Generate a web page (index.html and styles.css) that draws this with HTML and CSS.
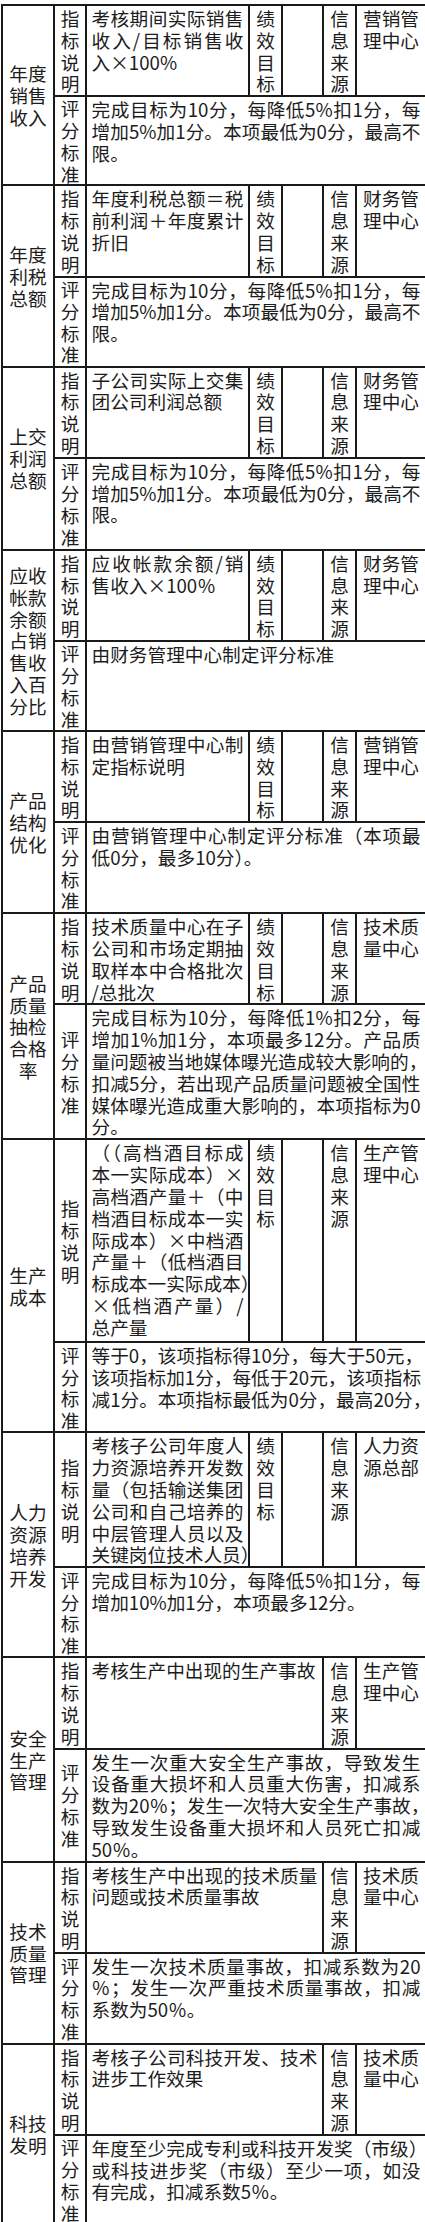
FILE: index.html
```html
<!DOCTYPE html>
<html lang="zh-CN">
<head>
<meta charset="utf-8">
<title>子公司绩效考核指标</title>
<link rel="stylesheet" href="styles.css">
</head>
<body>
<table class="kpi">
  <colgroup>
    <col class="c-name"><col class="c-tag"><col class="c-desc"><col class="c-goal"><col class="c-blank"><col class="c-src"><col class="c-owner">
  </colgroup>
  <tbody>
    <!-- 年度销售收入 -->
    <tr class="h90">
      <td class="name" rowspan="2">年度销售收入</td>
      <td class="tag">指标说明</td>
      <td class="desc"><span class="ln j">考核期间实际销售</span><span class="ln j">收入/目标销售收</span><span class="ln">入×100%</span></td>
      <td class="label">绩效目标</td>
      <td class="blank"></td>
      <td class="label">信息来源</td>
      <td class="owner">营销管理中心</td>
    </tr>
    <tr class="h89">
      <td class="tag">评分标准</td>
      <td class="desc" colspan="5"><span class="ln j">完成目标为10分，每降低5%扣1分，每</span><span class="ln j">增加5%加1分。本项最低为0分，最高不</span><span class="ln">限。</span></td>
    </tr>

    <!-- 年度利税总额 -->
    <tr class="h91">
      <td class="name" rowspan="2">年度利税总额</td>
      <td class="tag">指标说明</td>
      <td class="desc"><span class="ln j">年度利税总额＝税</span><span class="ln j">前利润＋年度累计</span><span class="ln">折旧</span></td>
      <td class="label">绩效目标</td>
      <td class="blank"></td>
      <td class="label">信息来源</td>
      <td class="owner">财务管理中心</td>
    </tr>
    <tr class="h90">
      <td class="tag">评分标准</td>
      <td class="desc" colspan="5"><span class="ln j">完成目标为10分，每降低5%扣1分，每</span><span class="ln j">增加5%加1分。本项最低为0分，最高不</span><span class="ln">限。</span></td>
    </tr>

    <!-- 上交利润总额 -->
    <tr class="h89">
      <td class="name" rowspan="2">上交利润总额</td>
      <td class="tag">指标说明</td>
      <td class="desc"><span class="ln j">子公司实际上交集</span><span class="ln">团公司利润总额</span></td>
      <td class="label">绩效目标</td>
      <td class="blank"></td>
      <td class="label">信息来源</td>
      <td class="owner">财务管理中心</td>
    </tr>
    <tr class="h92">
      <td class="tag">评分标准</td>
      <td class="desc" colspan="5"><span class="ln j">完成目标为10分，每降低5%扣1分，每</span><span class="ln j">增加5%加1分。本项最低为0分，最高不</span><span class="ln">限。</span></td>
    </tr>

    <!-- 应收帐款余额占销售收入百分比 -->
    <tr class="h90">
      <td class="name" rowspan="2">应收帐款余额占销售收入百分比</td>
      <td class="tag">指标说明</td>
      <td class="desc"><span class="ln j">应收帐款余额/销</span><span class="ln">售收入×100％</span></td>
      <td class="label">绩效目标</td>
      <td class="blank"></td>
      <td class="label">信息来源</td>
      <td class="owner">财务管理中心</td>
    </tr>
    <tr class="h90">
      <td class="tag">评分标准</td>
      <td class="desc" colspan="5"><span class="ln">由财务管理中心制定评分标准</span></td>
    </tr>

    <!-- 产品结构优化 -->
    <tr class="h90">
      <td class="name" rowspan="2">产品结构优化</td>
      <td class="tag">指标说明</td>
      <td class="desc"><span class="ln j">由营销管理中心制</span><span class="ln">定指标说明</span></td>
      <td class="label">绩效目标</td>
      <td class="blank"></td>
      <td class="label">信息来源</td>
      <td class="owner">营销管理中心</td>
    </tr>
    <tr class="h91">
      <td class="tag">评分标准</td>
      <td class="desc" colspan="5"><span class="ln j">由营销管理中心制定评分标准（本项最</span><span class="ln">低0分，最多10分）。</span></td>
    </tr>

    <!-- 产品质量抽检合格率 -->
    <tr class="h89">
      <td class="name" rowspan="2">产品质量抽检合格率</td>
      <td class="tag">指标说明</td>
      <td class="desc"><span class="ln j">技术质量中心在子</span><span class="ln j">公司和市场定期抽</span><span class="ln j">取样本中合格批次</span><span class="ln">/总批次</span></td>
      <td class="label">绩效目标</td>
      <td class="blank"></td>
      <td class="label">信息来源</td>
      <td class="owner">技术质量中心</td>
    </tr>
    <tr class="h135">
      <td class="tag">评分标准</td>
      <td class="desc" colspan="5"><span class="ln j">完成目标为10分，每降低1%扣2分，每</span><span class="ln j">增加1%加1分，本项最多12分。产品质</span><span class="ln">量问题被当地媒体曝光造成较大影响的，</span><span class="ln j">扣减5分，若出现产品质量问题被全国性</span><span class="ln j">媒体曝光造成重大影响的，本项指标为0</span><span class="ln">分。</span></td>
    </tr>

    <!-- 生产成本 -->
    <tr class="h203">
      <td class="name" rowspan="2">生产成本</td>
      <td class="tag">指标说明</td>
      <td class="desc"><span class="ln j">（（高档酒目标成</span><span class="ln j">本一实际成本）×</span><span class="ln j">高档酒产量＋（中</span><span class="ln j">档酒目标成本一实</span><span class="ln j">际成本）×中档酒</span><span class="ln j">产量＋（低档酒目</span><span class="ln">标成本一实际成本）</span><span class="ln j">×低档酒产量）/</span><span class="ln">总产量</span></td>
      <td class="label">绩效目标</td>
      <td class="blank"></td>
      <td class="label">信息来源</td>
      <td class="owner">生产管理中心</td>
    </tr>
    <tr class="h90">
      <td class="tag">评分标准</td>
      <td class="desc" colspan="5"><span class="ln j">等于0，该项指标得10分，每大于50元，</span><span class="ln j">该项指标加1分，每低于20元，该项指标</span><span class="ln">减1分。本项指标最低为0分，最高20分，</span></td>
    </tr>

    <!-- 人力资源培养开发 -->
    <tr class="h135">
      <td class="name" rowspan="2">人力资源培养开发</td>
      <td class="tag">指标说明</td>
      <td class="desc"><span class="ln j">考核子公司年度人</span><span class="ln j">力资源培养开发数</span><span class="ln j">量（包括输送集团</span><span class="ln j">公司和自己培养的</span><span class="ln j">中层管理人员以及</span><span class="ln">关键岗位技术人员）</span></td>
      <td class="label">绩效目标</td>
      <td class="blank"></td>
      <td class="label">信息来源</td>
      <td class="owner">人力资源总部</td>
    </tr>
    <tr class="h90">
      <td class="tag">评分标准</td>
      <td class="desc" colspan="5"><span class="ln j">完成目标为10分，每降低5%扣1分，每</span><span class="ln">增加10%加1分，本项最多12分。</span></td>
    </tr>

    <!-- 安全生产管理 -->
    <tr class="h89">
      <td class="name" rowspan="2">安全生产管理</td>
      <td class="tag">指标说明</td>
      <td class="desc" colspan="3"><span class="ln">考核生产中出现的生产事故</span></td>
      <td class="label">信息来源</td>
      <td class="owner">生产管理中心</td>
    </tr>
    <tr class="h113">
      <td class="tag">评分标准</td>
      <td class="desc" colspan="5"><span class="ln j">发生一次重大安全生产事故，导致发生</span><span class="ln j">设备重大损坏和人员重大伤害，扣减系</span><span class="ln">数为20％；发生一次特大安全生产事故，</span><span class="ln j">导致发生设备重大损坏和人员死亡扣减</span><span class="ln">50％。</span></td>
    </tr>

    <!-- 技术质量管理 -->
    <tr class="h90">
      <td class="name" rowspan="2">技术质量管理</td>
      <td class="tag">指标说明</td>
      <td class="desc" colspan="3"><span class="ln j">考核生产中出现的技术质量</span><span class="ln">问题或技术质量事故</span></td>
      <td class="label">信息来源</td>
      <td class="owner">技术质量中心</td>
    </tr>
    <tr class="h91">
      <td class="tag">评分标准</td>
      <td class="desc" colspan="5"><span class="ln j">发生一次技术质量事故，扣减系数为20</span><span class="ln j">％；发生一次严重技术质量事故，扣减</span><span class="ln">系数为50％。</span></td>
    </tr>

    <!-- 科技发明 -->
    <tr class="h90">
      <td class="name" rowspan="2">科技发明</td>
      <td class="tag">指标说明</td>
      <td class="desc" colspan="3"><span class="ln j">考核子公司科技开发、技术</span><span class="ln">进步工作效果</span></td>
      <td class="label">信息来源</td>
      <td class="owner">技术质量中心</td>
    </tr>
    <tr class="h90">
      <td class="tag">评分标准</td>
      <td class="desc" colspan="5"><span class="ln">年度至少完成专利或科技开发奖（市级）</span><span class="ln j">或科技进步奖（市级）至少一项，如没</span><span class="ln">有完成，扣减系数5％。</span></td>
    </tr>
  </tbody>
</table>
</body>
</html>
```

FILE: styles.css
```css
html {
  background: #ffffff;
}

body {
  margin: 0;
  font-family: "Noto Sans CJK SC", "Noto Sans", sans-serif;
  font-size: 18.67px;
  line-height: 21.8px;
  color: #1c1c1c;
}

.kpi {
  border-collapse: collapse;
  table-layout: fixed;
  width: 424px;
  margin: 4px 0 0 1px;
}

.c-name { width: 52px; }
.c-tag { width: 32px; }
.c-desc { width: 163px; }
.c-goal { width: 33px; }
.c-blank { width: 41px; }
.c-src { width: 33px; }
.c-owner { width: 70px; }

.kpi td {
  border: 2px solid #1a1a1a;
  padding: 1px 4.5px;
  vertical-align: top;
}

.kpi td.name {
  padding: 0;
  text-align: center;
  vertical-align: middle;
}

.kpi td.tag {
  padding: 0;
  text-align: center;
  vertical-align: middle;
}

.kpi td.label {
  padding: 1px 0;
  text-align: center;
}

.kpi td.owner {
  padding: 1px 4px;
  text-align: center;
}

.ln {
  display: block;
  white-space: nowrap;
}

.j {
  text-align: justify;
  text-align-last: justify;
}

.h89 { height: 89px; }
.h90 { height: 90px; }
.h91 { height: 91px; }
.h92 { height: 92px; }
.h113 { height: 113px; }
.h135 { height: 135px; }
.h203 { height: 203px; }
```
